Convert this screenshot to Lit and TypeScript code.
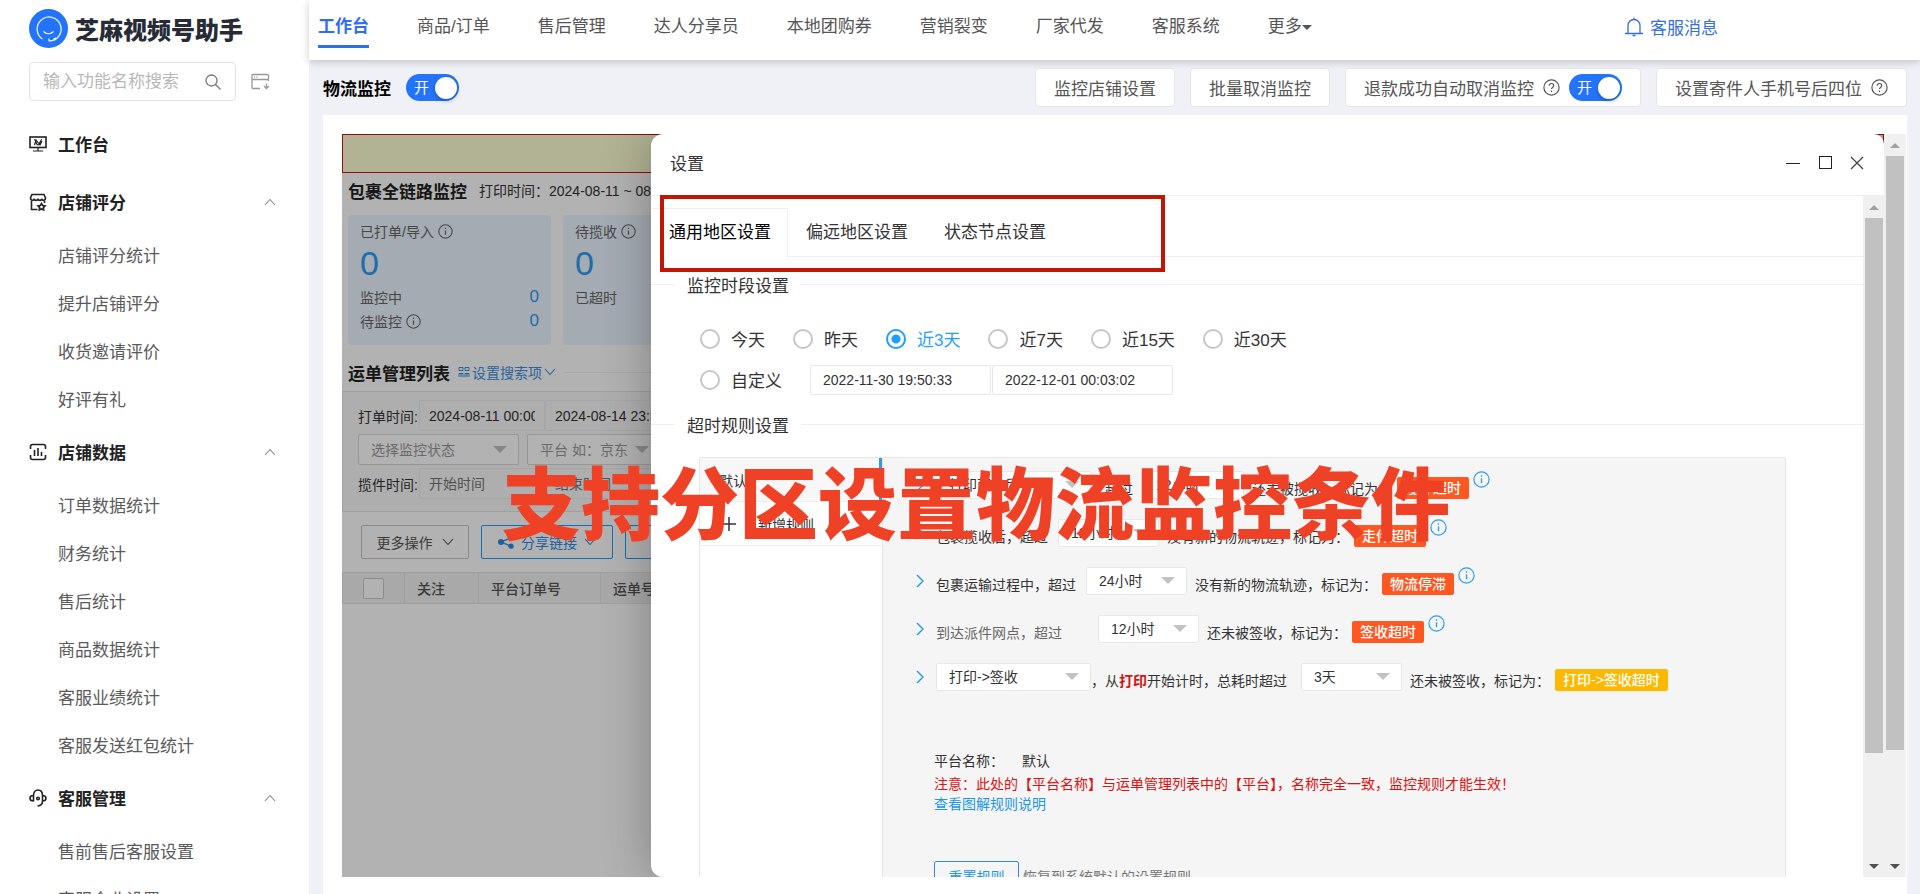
import { LitElement, html, css, svg, nothing } from "lit";
import { customElement, property } from "lit/decorators.js";
import { classMap } from "lit/directives/class-map.js";

interface MenuGroup {
  title: string;
  icon: string;
  items: string[];
}

const MENU: MenuGroup[] = [
  { title: "工作台", icon: "desk", items: [] },
  { title: "店铺评分", icon: "shop", items: ["店铺评分统计", "提升店铺评分", "收货邀请评价", "好评有礼"] },
  {
    title: "店铺数据",
    icon: "chart",
    items: ["订单数据统计", "财务统计", "售后统计", "商品数据统计", "客服业绩统计", "客服发送红包统计"],
  },
  { title: "客服管理", icon: "head", items: ["售前售后客服设置", "客服企业设置"] },
];

const NAV = ["工作台", "商品/订单", "售后管理", "达人分享员", "本地团购券", "营销裂变", "厂家代发", "客服系统"];

const ICONS: Record<string, unknown> = {
  desk: svg`<rect x="1" y="2" width="16" height="10.5"/><path d="M9 12.5v3.5M4 16h10M5 4.500c2 0 2 5.500 4 5.500s2-5.500 4-5.500M5.500 10l1.500-5 4 5 2-4" stroke-width="1.200"/>`,
  shop: svg`<path d="M2.500 8v8.500h6M15.500 8v2M3 1.500h12l1.500 3.500c0 3-3.700 3-3.700.5 0 2.500-3.800 2.500-3.800 0 0 2.500-3.800 2.500-3.800 0 0 2.500-3.700 2.500-3.700-.5z"/><path d="M12.500 10.500l1.200 2 2.300.4-1.600 1.700.3 2.300-2.200-1-2.200 1 .3-2.300L9 12.900l2.300-.4z"/>`,
  chart: svg`<path d="M1.500 6V3.500a2 2 0 0 1 2-2h11a2 2 0 0 1 2 2V6M1.500 12v2.500a2 2 0 0 0 2 2h11a2 2 0 0 0 2-2V12M5.500 7v6M9 5v8M12.500 9v4"/>`,
  head: svg`<path d="M4.500 6v6.500M13.500 6v6.500M4.500 6.500C1.500 6.500 1 8 1 9.200s.5 2.800 3.500 2.800M13.500 6.500c3 0 3.500 1.500 3.500 2.700s-.5 2.800-3.500 2.800M4.500 6.500C4.500 3 6.500 1 9 1s4.500 2 4.500 5.500M13.500 12.500c0 3-1.500 4-5 4.500"/><circle cx="9" cy="9.500" r="1.300"/>`,
};

const chevron = (cls: string) =>
  html`<svg class=${cls} viewBox="0 0 12 8" width="12" height="8" aria-hidden="true">
    <path d="M1 1l5 5.500L11 1" fill="none" stroke="currentColor" stroke-width="1.100" />
  </svg>`;

const info = (cls: string, size: number) =>
  html`<svg class=${cls} viewBox="0 0 17 17" width=${size} height=${size} aria-hidden="true">
    <circle cx="8.500" cy="8.500" r="7.600" fill="none" stroke="currentColor" stroke-width="1.200" />
    <path d="M8.500 7.300v5M8.500 4.300v1.500" stroke="currentColor" stroke-width="1.300" />
  </svg>`;

const help = html`<svg viewBox="0 0 17 17" width="17" height="17" aria-hidden="true">
  <circle cx="8.500" cy="8.500" r="7.600" fill="none" stroke="currentColor" stroke-width="1.200" />
  <path d="M6.200 6.800c0-3 4.600-3 4.600-.2 0 1.600-2.300 1.800-2.300 3.500M8.500 11.500v1.400" fill="none" stroke="currentColor" stroke-width="1.200" />
</svg>`;

const FONT = css`
  :host {
    box-sizing: border-box;
    font-family: "Liberation Sans", "Noto Sans CJK SC", sans-serif;
    color: #333;
  }
  *,
  *::before,
  *::after {
    box-sizing: border-box;
  }
  button,
  input,
  select {
    font: inherit;
    color: inherit;
    margin: 0;
  }
  button {
    padding: 0;
    border: 0;
    background: none;
    white-space: nowrap;
  }
  a {
    color: inherit;
    text-decoration: none;
  }
  svg {
    flex: none;
    display: block;
  }
`;

@customElement("power-switch")
class PowerSwitch extends LitElement {
  @property() name = "";
  static styles = [
    FONT,
    css`
      :host {
        display: block;
        flex: none;
      }
      .switch {
        display: flex;
        align-items: center;
        justify-content: space-between;
        position: relative;
        width: 53px;
        height: 27px;
        padding: 0 2px 0 8px;
        border-radius: 14px;
        background: #2474fb;
        color: #fff;
        font-size: 15px;
        line-height: 27px;
      }
      .box {
        appearance: none;
        position: absolute;
        inset: 0;
      }
      .knob {
        width: 22px;
        height: 22px;
        border-radius: 50%;
        background: #fff;
        box-shadow: 0 2px 4px rgba(0, 35, 11, 0.3);
      }
    `,
  ];
  render() {
    return html`<label class="switch"
      ><input class="box" type="checkbox" checked aria-label=${this.name} />开<span class="knob"></span
    ></label>`;
  }
}

@customElement("drop-down")
class DropDown extends LitElement {
  @property() value = "";
  @property() name = "";
  static styles = [
    FONT,
    css`
      :host {
        display: block;
        flex: none;
        position: relative;
        width: 101px;
        height: 28px;
        font-size: 14px;
      }
      :host([wide]) {
        width: 155px;
      }
      :host([filter]) {
        width: 161px;
        height: 31px;
        color: #999;
      }
      :host([short]) {
        width: 134px;
      }
      .select {
        appearance: none;
        width: 100%;
        height: 100%;
        padding: 0 12px;
        border: 1px solid #e8e8e8;
        border-radius: 2px;
        background: #fff;
      }
      :host([filter]) .select {
        border-color: #d8d8d8;
      }
      .tip {
        position: absolute;
        right: 12px;
        top: 50%;
        margin-top: -4px;
        border: 7px solid transparent;
        border-top-color: #c2c2c2;
        border-bottom: 0;
        pointer-events: none;
      }
    `,
  ];
  render() {
    return html`<select class="select" aria-label=${this.name}>
        <option>${this.value}</option></select
      ><span class="tip"></span>`;
  }
}

@customElement("scroll-rail")
class ScrollRail extends LitElement {
  static styles = [
    FONT,
    css`
      :host {
        display: grid;
        grid-template-rows: 22px 1fr 22px;
        justify-items: center;
        align-items: center;
        background: #f0f0f0;
      }
      .up,
      .down {
        border: 5px solid transparent;
      }
      .up {
        border-top: 0;
        border-bottom-color: #a2a2a2;
      }
      .down {
        border-bottom: 0;
        border-top-color: #505050;
      }
      .track {
        align-self: stretch;
        width: 18px;
      }
      .thumb {
        height: 85%;
        background: #c1c1c1;
      }
      :host([inner]) .thumb {
        height: 84%;
      }
    `,
  ];
  render() {
    return html`<span class="up"></span><span class="track"><div class="thumb"></div></span><span class="down"></span>`;
  }
}

@customElement("side-menu")
class SideMenu extends LitElement {
  static styles = [
    FONT,
    css`
      :host {
        display: block;
        overflow: hidden;
        background: #fff;
        padding: 9px 33px 0 29px;
        font-size: 17px;
      }
      .brand {
        display: flex;
        align-items: center;
        gap: 7px;
        height: 39px;
        font-size: 24px;
        font-weight: 900;
        color: #262b36;
        white-space: nowrap;
      }
      .find {
        display: flex;
        align-items: center;
        gap: 15px;
        margin: 14px 0;
        color: #999;
      }
      .field {
        display: flex;
        align-items: center;
        flex: none;
        width: 207px;
        height: 39px;
        padding: 0 14px 0 13px;
        border: 1px solid #e3e3e3;
        border-radius: 4px;
      }
      .query {
        flex: 1;
        min-width: 0;
        padding: 0;
        border: 0;
        background: none;
      }
      .query::placeholder {
        color: #b8b8b8;
      }
      .group {
        display: flex;
        align-items: center;
        width: 100%;
        height: 58px;
        font-weight: 700;
        color: #222;
      }
      .name {
        flex: 1;
        margin-left: 11px;
        padding-bottom: 2px;
        text-align: left;
      }
      .fold {
        color: #888;
        transform: rotate(180deg);
      }
      .item {
        display: block;
        padding: 4px 0 0 29px;
        line-height: 44px;
        color: #5a5a5a;
        white-space: nowrap;
      }
    `,
  ];
  render() {
    return html`
      <div class="brand">
        <svg viewBox="0 0 39 39" width="39" height="39" aria-hidden="true">
          <circle cx="19.500" cy="19.500" r="19.500" fill="#2474fb" />
          <path d="M13.500 30a12 12 0 1 1 6.500 2M20 32v-2.500M24 30.500a12 12 0 0 0 3-1.800" fill="none" stroke="#e8f1ff" stroke-width="1.300" />
          <path d="M14.500 22.500c3 3 7 3 10 0" fill="none" stroke="#fff" stroke-width="1.200" />
        </svg>
        <span>芝麻视频号助手</span>
      </div>
      <div class="find">
        <label class="field">
          <input class="query" placeholder="输入功能名称搜索" aria-label="输入功能名称搜索" />
          <svg viewBox="0 0 16 16" width="16" height="16" fill="none" stroke="#777" stroke-width="1.300">
            <circle cx="6.500" cy="6.500" r="5.500" /><path d="M10.500 10.500l5 5" />
          </svg>
        </label>
        <svg viewBox="0 0 19 17" width="19" height="17" fill="none" stroke="currentColor" stroke-width="1.300">
          <path d="M9 15.500H2a1 1 0 0 1-1-1v-12a1 1 0 0 1 1-1h14.500a1 1 0 0 1 1 1V8M1 6.500h16.500M3 4h1M5.500 4h1M15.500 10.500v5M13 13l2.500 2.500L18 13" />
        </svg>
      </div>
      <nav>
        ${MENU.map(
          (g) => html`<button class="group">
              <svg viewBox="0 0 18 18" width="18" height="18" fill="none" stroke="currentColor" stroke-width="1.600">${ICONS[g.icon]}</svg>
              <span class="name">${g.title}</span>
              ${g.items.length ? chevron("fold") : nothing}
            </button>
            ${g.items.map((i) => html`<a class="item" href="#">${i}</a>`)}`,
        )}
      </nav>
    `;
  }
}

@customElement("parcel-board")
class ParcelBoard extends LitElement {
  static styles = [
    FONT,
    css`
      :host {
        display: block;
        overflow: hidden;
        background: #fff;
        font-size: 14px;
        white-space: nowrap;
      }
      .notice {
        height: 39px;
        border: 1px solid #d01616;
        background: #ffffd6;
      }
      .title {
        display: flex;
        align-items: center;
        gap: 12px;
        height: 34px;
        padding-left: 6px;
      }
      .title h2,
      .list h2 {
        margin: 0;
        font-size: 17px;
        color: #222;
      }
      .cards {
        display: flex;
        gap: 12px;
        padding: 8px 6px 0;
      }
      .card {
        flex: none;
        width: 203px;
        height: 130px;
        padding: 5px 12px;
        border-radius: 4px;
        background: #ebf5ff;
        color: #666;
      }
      .label,
      .line {
        display: flex;
        align-items: center;
        gap: 4px;
        height: 24px;
      }
      .label {
        height: 22px;
      }
      .total {
        height: 43px;
        font-size: 34px;
        line-height: 42px;
        color: #2d9bf5;
      }
      .count {
        margin-left: auto;
        font-size: 17px;
        color: #2d9bf5;
      }
      .list {
        display: flex;
        align-items: center;
        gap: 8px;
        height: 38px;
        margin-top: 8px;
        padding-left: 6px;
      }
      .more {
        display: flex;
        align-items: center;
        gap: 2px;
        color: #3a8ee0;
      }
      .rule {
        flex: 1;
        border-top: 1px solid #eee;
      }
      .filters {
        display: grid;
        gap: 3px;
        padding: 8px 0 12px 15px;
        border: 1px solid #e6e6e6;
        background: #fafafa;
      }
      .filter {
        display: flex;
        align-items: center;
        height: 31px;
      }
      .caption {
        width: 61px;
      }
      .date {
        flex: none;
        width: 126px;
        height: 31px;
        padding: 0 9px;
        border: 1px solid #eee;
        border-radius: 2px;
        background: none;
      }
      .date::placeholder {
        color: #757575;
      }
      .choices {
        gap: 8px;
      }
      .tools {
        display: flex;
        gap: 12px;
        padding: 13px 0 13px 19px;
      }
      .tool {
        display: flex;
        align-items: center;
        justify-content: center;
        gap: 9px;
        flex: none;
        width: 108px;
        height: 34px;
        border: 1px solid #c4c4c4;
        border-radius: 2px;
        color: #555;
      }
      .tool.primary {
        gap: 7px;
        width: 132px;
        border-color: #1e9fff;
        color: #2d8be0;
      }
      .orders {
        width: 100%;
        border-collapse: collapse;
        table-layout: fixed;
        background: #f2f2f4;
        color: #555;
      }
      .orders th {
        height: 31px;
        padding: 0 0 0 12px;
        border: 1px solid #e6e6e6;
        text-align: left;
        font-weight: 500;
      }
      .orders .pick {
        width: 62px;
        padding-left: 20px;
      }
      .orders .watch {
        width: 74px;
      }
      .orders .order {
        width: 122px;
      }
      .tick {
        appearance: none;
        display: block;
        width: 21px;
        height: 21px;
        border: 1px solid #c8c8c8;
        border-radius: 2px;
        background: #fff;
      }
    `,
  ];
  render() {
    return html`
      <div class="notice"></div>
      <div class="title"><h2>包裹全链路监控</h2><span>打印时间：2024-08-11 ~ 08-14</span></div>
      <div class="cards">
        <div class="card">
          <div class="label">已打单/导入${info("", 15)}</div>
          <div class="total">0</div>
          <div class="line">监控中<span class="count">0</span></div>
          <div class="line">待监控${info("", 15)}<span class="count">0</span></div>
        </div>
        <div class="card">
          <div class="label">待揽收${info("", 15)}</div>
          <div class="total">0</div>
          <div class="line">已超时</div>
        </div>
      </div>
      <div class="list">
        <h2>运单管理列表</h2>
        <a class="more" href="#">
          <svg viewBox="0 0 12 12" width="12" height="12" fill="none" stroke="currentColor" stroke-width="1">
            <path d="M1 1.500h4v3H1zM7 1.500h4v3H7zM1 11V7.500h4V11M7 11V7.500h4V11M3 7.500V11M9 7.500V11" /></svg
          >设置搜索项${chevron("")}</a
        >
        <span class="rule"></span>
      </div>
      <div class="filters">
        <div class="filter">
          <label class="caption" for="print">打单时间:</label>
          <input class="date" id="print" value="2024-08-11 00:00:00" />
          <input class="date" aria-label="打单结束" value="2024-08-14 23:59:59" />
        </div>
        <div class="filter choices">
          <drop-down filter value="选择监控状态" name="监控状态"></drop-down>
          <drop-down filter short value="平台 如：京东" name="平台"></drop-down>
        </div>
        <div class="filter">
          <label class="caption" for="pickup">揽件时间:</label>
          <input class="date" id="pickup" placeholder="开始时间" />
          <input class="date" aria-label="揽件结束" placeholder="结束时间" />
        </div>
      </div>
      <div class="tools">
        <button class="tool">更多操作${chevron("")}</button>
        <button class="tool primary">
          <svg viewBox="0 0 16 14" width="16" height="14" fill="currentColor">
            <circle cx="3" cy="7" r="3" /><circle cx="13" cy="2.800" r="2.600" /><circle cx="13" cy="11.200" r="2.600" />
            <path d="M13 2.800L3 7l10 4.200" fill="none" stroke="currentColor" stroke-width="1.300" /></svg
          >分享链接${chevron("")}
        </button>
        <button class="tool primary">批量操作${chevron("")}</button>
      </div>
      <table class="orders">
        <tr>
          <th class="pick"><input class="tick" type="checkbox" aria-label="全选" /></th>
          <th class="watch">关注</th>
          <th class="order">平台订单号</th>
          <th>运单号</th>
        </tr>
      </table>
    `;
  }
}

@customElement("settings-dialog")
class SettingsDialog extends LitElement {
  static styles = [
    FONT,
    css`
      :host {
        display: grid;
        grid-template-rows: 62px 1fr;
        overflow: hidden;
        background: #fff;
        font-size: 17px;
        white-space: nowrap;
      }
      .head {
        display: flex;
        align-items: center;
        gap: 18px;
        padding: 0 20px 3px 19px;
        border-bottom: 1px solid #eee;
      }
      .head h1 {
        flex: 1;
        margin: 0;
        padding-bottom: 2px;
        font-size: 17px;
        font-weight: 400;
      }
      .body {
        display: grid;
        grid-template-columns: 1fr 21px;
        min-height: 0;
      }
      .view {
        overflow: hidden;
      }
      .tabs {
        display: flex;
        height: 49px;
        margin-top: 12px;
        border-bottom: 1px solid #eee;
      }
      .tab {
        height: 49px;
        padding: 0 18px 4px;
      }
      .tab.on {
        padding: 0 16px 5px 18px;
        border: 1px solid #eee;
        border-left: 0;
        border-bottom: 0;
        border-radius: 2px 2px 0 0;
        background: #fff;
        color: #000;
      }
      .part {
        min-width: 0;
        margin: 13px 0 0;
        padding: 0;
        border: 0;
        border-top: 1px solid #eee;
      }
      .part legend {
        margin-left: 24px;
        padding: 5px 12px 0;
        line-height: 24px;
      }
      .span {
        padding: 19px 0 0 49px;
      }
      .row {
        display: flex;
        align-items: center;
        gap: 28px;
        height: 41px;
      }
      .choice {
        display: flex;
        align-items: center;
        gap: 11px;
      }
      .radio {
        appearance: none;
        width: 20px;
        height: 20px;
        border: 2px solid #c6c6c6;
        border-radius: 50%;
      }
      .choice.on {
        color: #1e9fff;
      }
      .choice.on .radio {
        border-color: #1e9fff;
        background: radial-gradient(circle, #1e9fff 4px, #fff 5px);
      }
      .times {
        display: flex;
        gap: 1px;
      }
      .time {
        width: 181px;
        height: 30px;
        padding: 0 12px;
        border: 1px solid #e8e8e8;
        border-radius: 2px;
        font-size: 14px;
      }
      .last {
        margin-top: 10px;
      }
      .rules {
        display: grid;
        grid-template-columns: 183px 1fr;
        min-height: 560px;
        margin: 18px 77px 0 48px;
        border: 1px solid #e6e6e6;
        border-radius: 2px;
        background: #f5f5f5;
        font-size: 14px;
      }
      .kinds {
        border-right: 1px solid #e6e6e6;
        background: #fff;
      }
      .kind {
        display: flex;
        align-items: center;
        gap: 22px;
        width: 100%;
        height: 44px;
        padding-left: 22px;
        border-bottom: 1px solid #eee;
      }
      .kind.on {
        padding-left: 19px;
        border-right: 3px solid #3a97e0;
        background: #f7f7f7;
      }
      .panel {
        padding: 13px 0 0 33px;
      }
      .rule {
        display: flex;
        align-items: flex-end;
        height: 28px;
        margin-bottom: 20px;
        line-height: 20px;
      }
      .go {
        align-self: center;
        margin-right: 12px;
        color: #2d9bf5;
      }
      .gap {
        margin-right: 10px;
      }
      .wide {
        margin-right: 14px;
      }
      .far {
        margin-right: 36px;
        color: #666;
      }
      .then {
        margin: 0 5px 0 8px;
      }
      .tag {
        padding: 0 8px;
        border-radius: 2px;
        background: #ff5722;
        color: #fff;
        line-height: 22px;
        font-weight: 500;
      }
      .tag.warn {
        background: #ffb800;
      }
      .mark {
        align-self: flex-start;
        margin-left: 4px;
        color: #2d9bf5;
      }
      .hot {
        color: #d01616;
      }
      .foot {
        padding: 38px 0 0 18px;
        line-height: 24px;
      }
      .platform {
        display: flex;
        gap: 18px;
      }
      .alert {
        color: #e01010;
        line-height: 22px;
      }
      .guide {
        display: block;
        line-height: 18px;
        color: #2196e8;
      }
      .reset {
        display: flex;
        align-items: center;
        gap: 4px;
        margin-top: 48px;
        color: #777;
      }
      .button {
        width: 85px;
        height: 32px;
        border: 1px solid #2d8be0;
        border-radius: 2px;
        color: #2196e8;
      }
    `,
  ];

  private choice(label: string, on = false) {
    return html`<label class=${classMap({ choice: true, on })}
      ><input class="radio" type="radio" name="span" ?checked=${on} />${label}</label
    >`;
  }

  private get go() {
    return html`<svg class="go" viewBox="0 0 8 14" width="8" height="14" aria-hidden="true">
      <path d="M1 1l6 6-6 6" fill="none" stroke="currentColor" stroke-width="1.500" />
    </svg>`;
  }

  render() {
    return html`
      <header class="head">
        <h1>设置</h1>
        <button aria-label="最小化">
          <svg viewBox="0 0 14 14" width="14" height="14"><path d="M0 7.500h14" stroke="#222" /></svg>
        </button>
        <button aria-label="最大化">
          <svg viewBox="0 0 14 14" width="14" height="14"><rect x="1.500" y=".5" width="12" height="12" fill="none" stroke="#222" /></svg>
        </button>
        <button aria-label="关闭">
          <svg viewBox="0 0 14 14" width="14" height="14"><path d="M1 1l12 12M13 1L1 13" stroke="#444" stroke-width="1.300" /></svg>
        </button>
      </header>
      <div class="body">
        <div class="view">
          <div class="tabs" role="tablist">
            <button class="tab on" role="tab">通用地区设置</button>
            <button class="tab" role="tab">偏远地区设置</button>
            <button class="tab" role="tab">状态节点设置</button>
          </div>
          <fieldset class="part">
            <legend>监控时段设置</legend>
            <div class="span">
              <div class="row">
                ${this.choice("今天")}${this.choice("昨天")}${this.choice("近3天", true)}${this.choice("近7天")}${this.choice("近15天")}${this.choice("近30天")}
              </div>
              <div class="row">
                ${this.choice("自定义")}
                <div class="times">
                  <input class="time" aria-label="开始" value="2022-11-30 19:50:33" />
                  <input class="time" aria-label="结束" value="2022-12-01 00:03:02" />
                </div>
              </div>
            </div>
          </fieldset>
          <fieldset class="part last">
            <legend>超时规则设置</legend>
            <div class="rules">
              <div class="kinds">
                <button class="kind on">默认</button>
                <button class="kind">
                  <svg viewBox="0 0 14 14" width="14" height="14"><path d="M7 0v14M0 7h14" stroke="#333" stroke-width="1.500" /></svg>新增规则
                </button>
              </div>
              <div class="panel">
                <div class="rule">
                  ${this.go}<drop-down wide value="打印面单后" name="起点"></drop-down>
                  <span class="gap">，超过</span><drop-down value="12小时" name="时长"></drop-down>
                  <span class="then">还未被揽收，标记为：</span><span class="tag">揽件超时</span>${info("mark", 17)}
                </div>
                <div class="rule">
                  ${this.go}<span class="gap">包裹揽收后，超过</span><drop-down value="12小时" name="时长"></drop-down>
                  <span class="then">没有新的物流轨迹，标记为：</span><span class="tag">走件超时</span>${info("mark", 17)}
                </div>
                <div class="rule">
                  ${this.go}<span class="gap">包裹运输过程中，超过</span><drop-down value="24小时" name="时长"></drop-down>
                  <span class="then">没有新的物流轨迹，标记为：</span><span class="tag">物流停滞</span>${info("mark", 17)}
                </div>
                <div class="rule">
                  ${this.go}<span class="far">到达派件网点，超过</span><drop-down value="12小时" name="时长"></drop-down>
                  <span class="then">还未被签收，标记为：</span><span class="tag">签收超时</span>${info("mark", 17)}
                </div>
                <div class="rule">
                  ${this.go}<drop-down wide value="打印->签收" name="区间"></drop-down>
                  <span class="wide">，从<b class="hot">打印</b>开始计时，总耗时超过</span><drop-down value="3天" name="时长"></drop-down>
                  <span class="then">还未被签收，标记为：</span><span class="tag warn">打印->签收超时</span>
                </div>
                <div class="foot">
                  <div class="platform"><span>平台名称：</span><span>默认</span></div>
                  <div class="alert">注意：此处的【平台名称】与运单管理列表中的【平台】，名称完全一致，监控规则才能生效！</div>
                  <a class="guide" href="#">查看图解规则说明</a>
                  <div class="reset"><button class="button">重置规则</button>恢复到系统默认的设置规则</div>
                </div>
              </div>
            </div>
          </fieldset>
        </div>
        <scroll-rail inner></scroll-rail>
      </div>
    `;
  }
}

@customElement("app-root")
class AppRoot extends LitElement {
  static styles = [
    FONT,
    css`
      :host {
        display: grid;
        grid-template-columns: 309px minmax(0, 1fr);
        height: 100vh;
        overflow: hidden;
        background: #eff1f6;
        font-size: 17px;
        white-space: nowrap;
      }
      .main {
        display: grid;
        grid-template-rows: 60px 55px minmax(0, 1fr);
        min-width: 0;
        min-height: 0;
      }
      .top {
        display: flex;
        align-items: center;
        gap: 48px;
        padding: 0 202px 3px 9px;
        background: #fff;
        box-shadow: 0 2px 8px rgba(0, 0, 0, 0.2);
        color: #555;
        z-index: 1;
      }
      .link {
        line-height: 36px;
        border-bottom: 3px solid transparent;
      }
      .link.on {
        border-color: #2f6fec;
        font-weight: 700;
        color: #2f6fec;
      }
      .others {
        display: flex;
        align-items: center;
      }
      .caret {
        border: 5px solid transparent;
        border-top-color: #555;
        border-bottom: 0;
      }
      .news {
        display: flex;
        align-items: center;
        gap: 7px;
        margin-left: auto;
        padding-bottom: 4px;
        color: #3470d8;
      }
      .bar {
        display: flex;
        align-items: center;
        gap: 15px;
        padding: 0 13px 0 14px;
        color: #555;
      }
      .bar h1 {
        margin: 0;
        font-size: 17px;
        color: #000;
      }
      .space {
        flex: 1;
      }
      .action {
        display: flex;
        align-items: center;
        gap: 9px;
        height: 39px;
        padding: 0 18px;
        border: 1px solid #e4e6ea;
        border-radius: 4px;
        background: #fff;
      }
      .page {
        display: flex;
        margin: 0 13px 0 14px;
        padding: 19px 1px 17px 19px;
        background: #fff;
      }
      .frame {
        flex: 1;
        display: grid;
        grid-template-columns: minmax(0, 1fr) 22px;
        position: relative;
        min-width: 0;
      }
      .stage {
        display: grid;
        position: relative;
        overflow: hidden;
      }
      .shade {
        position: absolute;
        inset: 0;
        background: rgba(0, 0, 0, 0.3);
      }
      .dialog {
        position: absolute;
        inset: 0 0 0 309px;
        border-radius: 12px 10px 0 12px;
        box-shadow: 1px 1px 50px rgba(0, 0, 0, 0.3);
      }
      .outline {
        position: absolute;
        left: 318px;
        top: 61px;
        width: 505px;
        height: 77px;
        border: 4px solid #bf1606;
      }
      .slogan {
        position: absolute;
        left: 160px;
        top: 333px;
        font-size: 79px;
        line-height: 79px;
        font-weight: 900;
        color: #ef4126;
      }
    `,
  ];
  render() {
    return html`
      <side-menu></side-menu>
      <div class="main">
        <nav class="top">
          ${NAV.map((n, i) => html`<a class=${classMap({ link: true, on: i === 0 })} href="#">${n}</a>`)}
          <a class="link others" href="#">更多<span class="caret"></span></a>
          <a class="news" href="#">
            <svg viewBox="0 0 18 20" width="18" height="20" fill="none" stroke="currentColor" stroke-width="1.300">
              <path d="M0 16.500h18M3 16.500V8.500a6 6 0 0 1 12 0v8M9 2.500V.5M7.500 18.500h3" /></svg
            >客服消息</a
          >
        </nav>
        <div class="bar">
          <h1>物流监控</h1>
          <power-switch name="物流监控"></power-switch>
          <span class="space"></span>
          <button class="action">监控店铺设置</button>
          <button class="action">批量取消监控</button>
          <div class="action">退款成功自动取消监控${help}<power-switch name="退款成功自动取消监控"></power-switch></div>
          <button class="action">设置寄件人手机号后四位${help}</button>
        </div>
        <main class="page">
          <div class="frame">
            <div class="stage">
              <parcel-board></parcel-board>
              <div class="shade"></div>
              <settings-dialog class="dialog"></settings-dialog>
            </div>
            <scroll-rail></scroll-rail>
            <div class="outline"></div>
            <div class="slogan">支持分区设置物流监控条件</div>
          </div>
        </main>
      </div>
    `;
  }
}
